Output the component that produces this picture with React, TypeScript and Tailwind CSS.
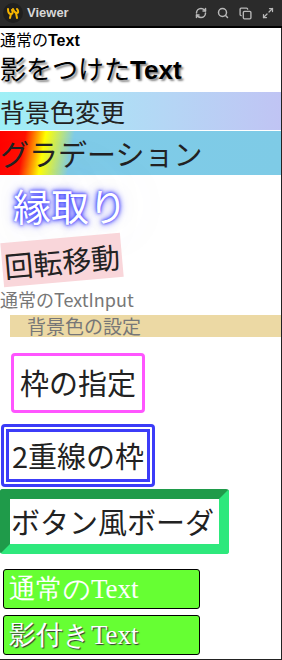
import React from 'react';
import { RefreshCw, Search, Copy, Maximize2 } from 'lucide-react';

const jp = "font-['Noto_Sans_CJK_JP',sans-serif]";

function Header() {
  return (
    <div className="flex h-[28px] items-center border-b-2 border-black bg-[#2b2b2b] pl-[3px] pr-[8px]">
      <div className="flex h-[20px] w-[20px] items-center justify-center rounded-full bg-[#1f1f1f]">
        <svg width="14" height="14" viewBox="0 0 14 14" fill="none" stroke="#f5b400" strokeWidth="2" strokeLinecap="round">
          <path d="M2 3c0 4 1 5 3 5s2-2 1-4" />
          <path d="M7 3c1 3 2 4 4 4s1-3 0-4" />
          <path d="M5 8l-1 4M10 7l1 5" />
        </svg>
      </div>
      <span className="ml-[4px] font-['Liberation_Sans',sans-serif] text-[13px] font-bold text-[#d8d8d8]">Viewer</span>
      <div className="ml-auto flex items-center gap-[10px] text-[#b8b8b8]">
        <RefreshCw size={12} strokeWidth={3} />
        <Search size={12} strokeWidth={3} />
        <Copy size={13} strokeWidth={2.5} />
        <Maximize2 size={12} strokeWidth={2.5} />
      </div>
    </div>
  );
}

export default function App() {
  return (
    <div className="h-[660px] w-[282px] overflow-hidden bg-white">
      <Header />
      <div className={`relative h-[632px] overflow-hidden border-r border-b border-[#222] ${jp} text-[#222]`}>
        <div className="h-[22px] text-[16px] leading-[22px] text-black">
          通常の<span className="font-['Liberation_Sans',sans-serif] font-bold">Text</span>
        </div>
        <div className="mt-[2px] h-[32px] text-[26px] leading-[32px] text-black [text-shadow:2px_2px_2px_#888]">
          影をつけた<span className="font-['Liberation_Sans',sans-serif] font-bold">Text</span>
        </div>
        <div className="mt-[8px] h-[38px] bg-gradient-to-r from-[#9ef0f6] to-[#c0c4f4] text-[25px] leading-[38px]">
          背景色変更
        </div>
        <div className="mt-[1px] h-[44px] bg-[linear-gradient(100deg,#ff0000_0%,#ff1000_9%,#ffff00_16%,#7fcbe8_26%,#7ecbe6_100%)] text-[29px] leading-[44px]">
          グラデーション
        </div>
        <div className="mt-[2px] h-[56px] pl-[13px] text-[38px] leading-[56px] text-white [text-shadow:0_0_3px_#3a3aff,0_0_5px_#4a4aff,0_0_9px_#6a6aff,0_0_70px_rgba(170,170,210,0.3)]">
          縁取り
        </div>
        <div className="mt-[2px] h-[52px] pl-[2px] pt-[3px]">
          <div className="inline-block -rotate-[5deg] bg-[#f9d6da] px-[2px] text-[29px] leading-[44px]">
            回転移動
          </div>
        </div>
        <div className="h-[24px] text-[18px] leading-[24px] text-[#777]">通常のTextInput</div>
        <div className="ml-[10px] mt-[4px] h-[22px] bg-[#ecd9a4] pl-[17px] text-[19px] leading-[22px] text-[#777]">
          背景色の設定
        </div>
        <div className="ml-[11px] mt-[16px] flex h-[60px] w-[134px] items-center justify-center rounded-[4px] border-[3px] border-[#ff55ff] text-[29px]">
          枠の指定
        </div>
        <div className="ml-[1px] mt-[11px] flex h-[63px] w-[154px] items-center justify-center rounded-[4px] border-[8px] border-double border-[#3c3cf8] text-[29px]">
          2重線の枠
        </div>
        <div className="mt-[2px] flex h-[65px] w-[229px] items-center overflow-hidden whitespace-nowrap rounded-[3px] border-[10px] border-t-[#1f9b4a] border-l-[#1f9b4a] border-r-[#2ee87c] border-b-[#2ee87c] pl-[1px] text-[29px]">
          ボタン風ボーダ
        </div>
        <div className="ml-[3px] mt-[15px] flex h-[40px] w-[197px] items-center rounded-[3px] border border-black bg-[#66ff33] pl-[5px] font-['Liberation_Serif',serif] text-[27px] text-white">
          通常のText
        </div>
        <div className="ml-[3px] mt-[6px] flex h-[40px] w-[197px] items-center rounded-[3px] border border-black bg-[#66ff33] pl-[5px] font-['Liberation_Serif',serif] text-[27px] text-white [text-shadow:1px_1px_1px_#333]">
          影付きText
        </div>
      </div>
    </div>
  );
}
